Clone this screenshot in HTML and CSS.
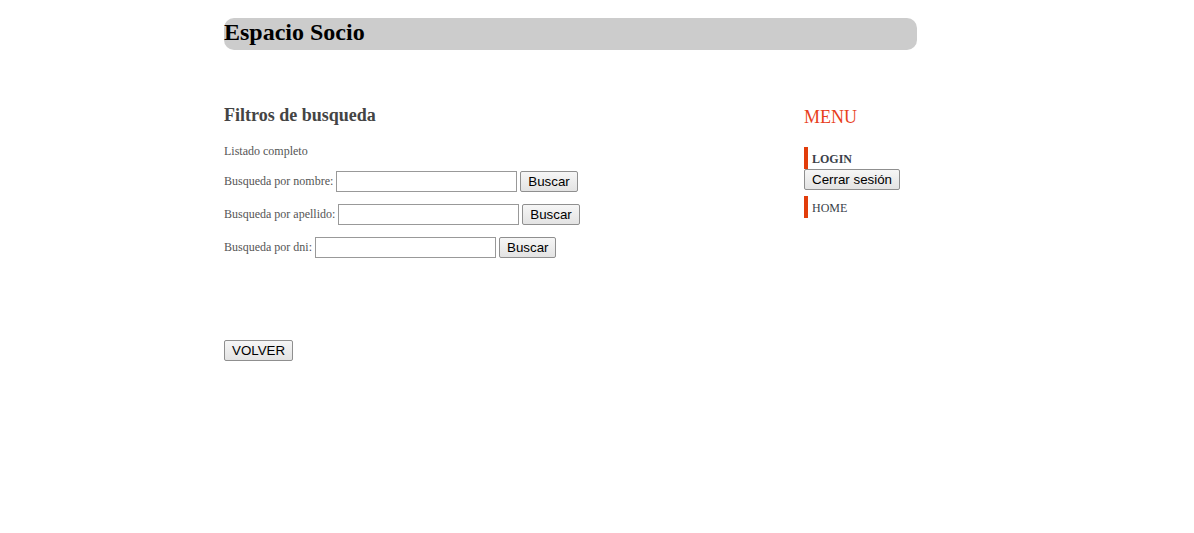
FILE: index.html
```html
<!DOCTYPE html>
<html lang="es">
<head>
<meta charset="utf-8">
<title>Espacio Socio</title>
<link rel="stylesheet" href="styles.css">
</head>
<body>
<div class="page">
  <header class="header"><h1 class="title">Espacio Socio</h1></header>
  <div class="columns">
    <main class="main">
      <h3 class="section-title">Filtros de busqueda</h3>
      <p class="line">Listado completo</p>
      <form class="row"><label class="label">Busqueda por nombre:</label><input class="field" type="text"><button class="btn" type="button">Buscar</button></form>
      <form class="row"><label class="label">Busqueda por apellido:</label><input class="field" type="text"><button class="btn" type="button">Buscar</button></form>
      <form class="row"><label class="label">Busqueda por dni:</label><input class="field" type="text"><button class="btn" type="button">Buscar</button></form>
      <div class="back"><button class="btn" type="button">VOLVER</button></div>
    </main>
    <aside class="sidebar">
      <h2 class="menu-title">MENU</h2>
      <div class="menu-item bold">LOGIN</div>
      <button class="btn" type="button">Cerrar sesión</button>
      <div class="menu-item home">HOME</div>
    </aside>
  </div>
</div>
</body>
</html>
```
FILE: styles.css
```css
html, body { margin: 0; padding: 0; background: #fff; }
body { font-family: "Liberation Serif", "Times New Roman", serif; color: #555; }
.page { margin-left: 224px; width: 693px; padding-top: 18px; }
.header { background: #ccc; border-radius: 10px; height: 32px; }
.title { margin: 0; font-size: 24px; line-height: 28px; font-weight: bold; color: #000; }
.columns { display: flex; margin-top: 54px; }
.main { width: 580px; }
.section-title { margin: 0; font-size: 18px; line-height: 22px; color: #444; font-weight: bold; }
.line { margin: 18px 0 0; font-size: 12px; line-height: 14px; }
.row { display: flex; align-items: center; margin-top: 13px; height: 21px; font-size: 12px; }
.row + .row { margin-top: 12px; }
.label { margin-right: 3px; }
.field { width: 181px; height: 21px; box-sizing: border-box; border: 1px solid #999; margin: 0 3px 0 0; padding: 1px 2px; font: 13.33px "Liberation Sans", Arial, sans-serif; }
.btn { font: 13.33px "Liberation Sans", Arial, sans-serif; color: #000; height: 21px; padding: 1px 7px; border: 1px solid #8f8f8f; border-radius: 2px; background: linear-gradient(#f6f6f6, #e3e3e3); }
.back { margin-top: 82px; }
.sidebar { width: 113px; }
.menu-title { margin: 2px 0 0; font-size: 18px; line-height: 22px; font-weight: normal; color: #e8401c; }
.menu-item { margin-top: 19px; border-left: 4px solid #e23d0b; padding: 1px 0 0 4px; height: 21px; line-height: 22px; font-size: 12px; color: #3a3f4a; }
.menu-item.bold { font-weight: bold; }
.menu-item.home { margin-top: 6px; }
.sidebar .btn { display: block; }
```
